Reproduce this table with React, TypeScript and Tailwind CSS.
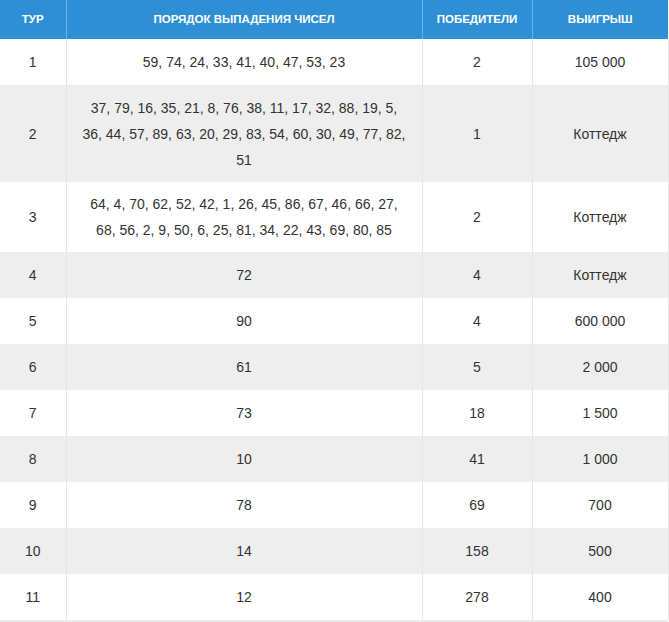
const rows: { tour: string; nums: string[]; winners: string; prize: string; h: string }[] = [
  { tour: "1", nums: ["59, 74, 24, 33, 41, 40, 47, 53, 23"], winners: "2", prize: "105 000", h: "h-[46px]" },
  {
    tour: "2",
    nums: [
      "37, 79, 16, 35, 21, 8, 76, 38, 11, 17, 32, 88, 19, 5,",
      "36, 44, 57, 89, 63, 20, 29, 83, 54, 60, 30, 49, 77, 82,",
      "51",
    ],
    winners: "1",
    prize: "Коттедж",
    h: "h-[97px]",
  },
  {
    tour: "3",
    nums: [
      "64, 4, 70, 62, 52, 42, 1, 26, 45, 86, 67, 46, 66, 27,",
      "68, 56, 2, 9, 50, 6, 25, 81, 34, 22, 43, 69, 80, 85",
    ],
    winners: "2",
    prize: "Коттедж",
    h: "h-[70px]",
  },
  { tour: "4", nums: ["72"], winners: "4", prize: "Коттедж", h: "h-[46px]" },
  { tour: "5", nums: ["90"], winners: "4", prize: "600 000", h: "h-[46px]" },
  { tour: "6", nums: ["61"], winners: "5", prize: "2 000", h: "h-[46px]" },
  { tour: "7", nums: ["73"], winners: "18", prize: "1 500", h: "h-[46px]" },
  { tour: "8", nums: ["10"], winners: "41", prize: "1 000", h: "h-[46px]" },
  { tour: "9", nums: ["78"], winners: "69", prize: "700", h: "h-[46px]" },
  { tour: "10", nums: ["14"], winners: "158", prize: "500", h: "h-[46px]" },
  { tour: "11", nums: ["12"], winners: "278", prize: "400", h: "h-[46px]" },
]

export default function App() {
  return (
    <div className="min-h-screen bg-white font-['Liberation_Sans',Arial,sans-serif]">
      <table className="w-[668px] table-fixed border-collapse text-[14px] text-[#333]">
        <colgroup>
          <col className="w-[66px]" />
          <col className="w-[356px]" />
          <col className="w-[110px]" />
          <col className="w-[136px]" />
        </colgroup>
        <thead>
          <tr className="h-[39px] bg-[#2f8fd4] text-[11.5px] font-bold uppercase text-white">
            <th className="border-r border-[#6fb2e4] p-0 text-center">Тур</th>
            <th className="border-r border-[#6fb2e4] p-0 text-center">Порядок выпадения чисел</th>
            <th className="border-r border-[#6fb2e4] p-0 text-center">Победители</th>
            <th className="p-0 text-center">Выигрыш</th>
          </tr>
        </thead>
        <tbody>
          {rows.map((r, i) => (
            <tr key={r.tour} className={`${r.h} ${i % 2 === 1 ? "bg-[#eeeeee]" : "bg-white"}`}>
              <td className="border-r border-[#e6e6e6] p-0 text-center leading-[26px]">{r.tour}</td>
              <td className="border-r border-[#e6e6e6] p-0 text-center leading-[26px]">
                {r.nums.map((line) => (
                  <div key={line}>{line}</div>
                ))}
              </td>
              <td className="border-r border-[#e6e6e6] p-0 text-center leading-[26px]">{r.winners}</td>
              <td className="border-r border-[#e6e6e6] p-0 text-center leading-[26px]">{r.prize}</td>
            </tr>
          ))}
        </tbody>
      </table>
      <div className="h-[2px] w-[668px] bg-[#eeeeee]" />
    </div>
  )
}
